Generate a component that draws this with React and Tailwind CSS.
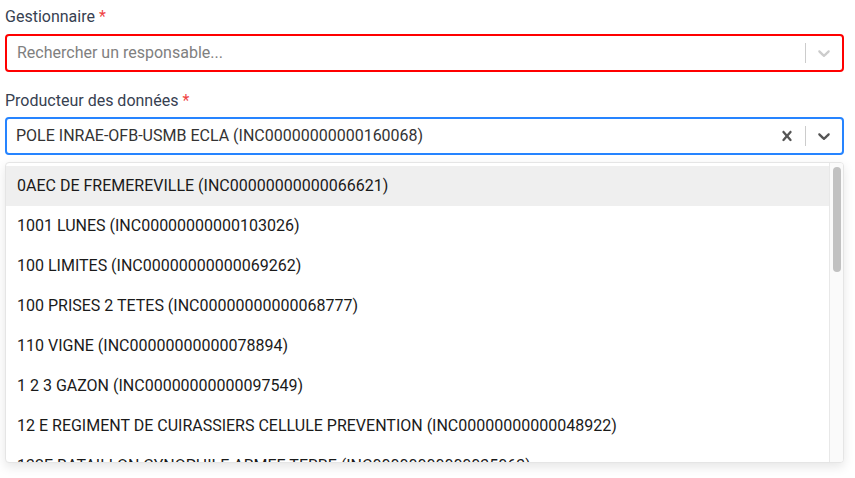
import React from "react";

const options = [
  "0AEC DE FREMEREVILLE (INC00000000000066621)",
  "1001 LUNES (INC00000000000103026)",
  "100 LIMITES (INC00000000000069262)",
  "100 PRISES 2 TETES (INC00000000000068777)",
  "110 VIGNE (INC00000000000078894)",
  "1 2 3 GAZON (INC00000000000097549)",
  "12 E REGIMENT DE CUIRASSIERS CELLULE PREVENTION (INC00000000000048922)",
  "132E BATAILLON CYNOPHILE ARMEE TERRE (INC00000000000035063)",
];

function Chevron({ color }) {
  return (
    <svg width="20" height="20" viewBox="0 0 20 20" fill={color}>
      <path d="M4.516 7.548c0.436-0.446 1.043-0.481 1.576 0l3.908 3.747 3.908-3.747c0.533-0.481 1.141-0.446 1.574 0 0.436 0.445 0.408 1.197 0 1.615-0.406 0.418-4.695 4.502-4.695 4.502-0.217 0.223-0.502 0.335-0.787 0.335s-0.57-0.112-0.789-0.335c0 0-4.287-4.084-4.695-4.502s-0.436-1.170 0-1.615z" />
    </svg>
  );
}

function Cross() {
  return (
    <svg width="20" height="20" viewBox="0 0 20 20" fill="#555">
      <path d="M14.348 14.849c-0.469 0.469-1.229 0.469-1.697 0l-2.651-3.030-2.651 3.029c-0.469 0.469-1.229 0.469-1.697 0-0.469-0.469-0.469-1.229 0-1.697l2.758-3.150-2.759-3.152c-0.469-0.469-0.469-1.228 0-1.697s1.228-0.469 1.697 0l2.652 3.031 2.651-3.031c0.469-0.469 1.228-0.469 1.697 0s0.469 1.229 0 1.697l-2.758 3.152 2.758 3.150c0.469 0.469 0.469 1.229 0 1.698z" />
    </svg>
  );
}

export default function App() {
  return (
    <div className="w-[855px] h-[478px] bg-white px-[5px] pt-[5px] overflow-hidden" style={{ fontFamily: "Roboto, 'Liberation Sans', sans-serif" }}>
      <div className="w-[839px]">
        <div className="h-[24px] leading-[24px] text-[16px] text-[#374151]">
          Gestionnaire <span className="text-[#ef4444]">*</span>
        </div>
        <div className="mt-[5px] h-[38px] border-2 border-[#ff0000] rounded-[4px] flex items-center">
          <div className="flex-1 pl-[10px] text-[16px] text-[#808080]">Rechercher un responsable...</div>
          <div className="w-px h-[20px] bg-[#cccccc]"></div>
          <div className="w-[36px] flex justify-center">
            <Chevron color="#cccccc" />
          </div>
        </div>

        <div className="mt-[17px] h-[24px] leading-[24px] text-[16px] text-[#374151]">
          Producteur des données <span className="text-[#ef4444]">*</span>
        </div>
        <div className="mt-[4px] h-[38px] border-2 border-[#2684ff] rounded-[4px] flex items-center">
          <div className="flex-1 pl-[9px] text-[16px] text-[#333333]">POLE INRAE-OFB-USMB ECLA (INC00000000000160068)</div>
          <div className="w-[36px] flex justify-center">
            <Cross />
          </div>
          <div className="w-px h-[20px] bg-[#cccccc]"></div>
          <div className="w-[36px] flex justify-center">
            <Chevron color="#555555" />
          </div>
        </div>

        <div className="mt-[7px] h-[301px] border border-[#e5e5e5] rounded-[4px] shadow-[0_4px_11px_rgba(0,0,0,0.1)] flex overflow-hidden bg-white">
          <div className="flex-1 pt-[3px] overflow-hidden">
            {options.map((o, i) => (
              <div
                key={i}
                className={`h-[40px] flex items-center pl-[11px] text-[16px] text-[#1a1a1a] whitespace-nowrap ${i === 0 ? "bg-[#efefef]" : ""}`}
              >
                {o}
              </div>
            ))}
          </div>
          <div className="w-[14px] border-l border-[#e8e8e8] bg-[#fafafa] pt-[4px] flex justify-center">
            <div className="w-[8px] h-[105px] rounded-full bg-[#c1c1c1]"></div>
          </div>
        </div>
      </div>
    </div>
  );
}
